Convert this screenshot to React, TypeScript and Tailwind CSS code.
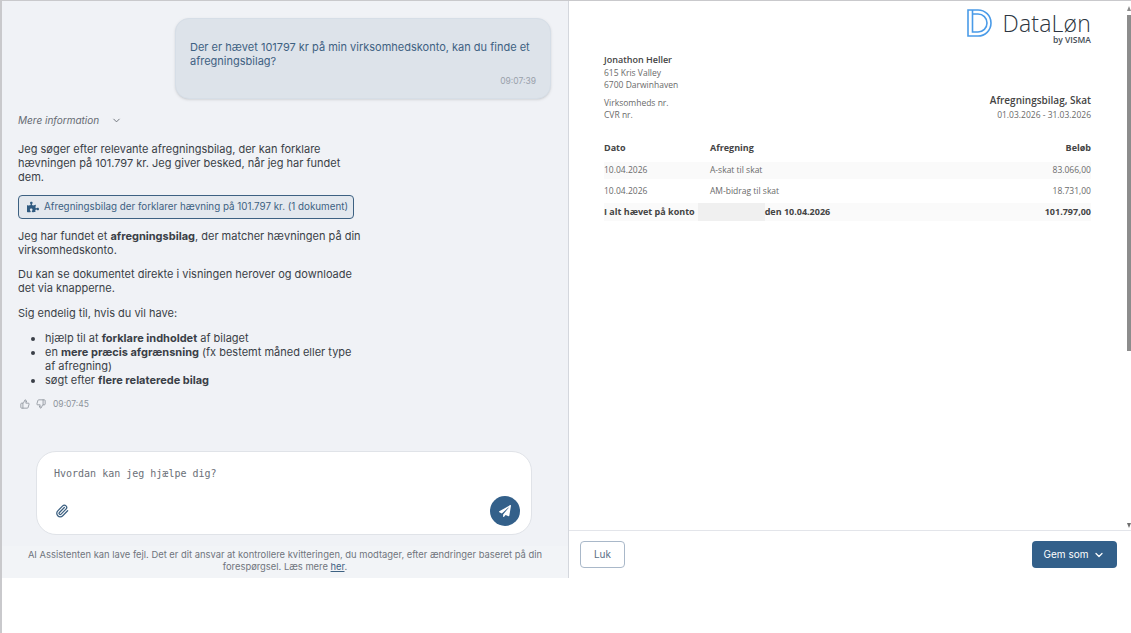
import { ChevronDown, Paperclip, ThumbsDown, ThumbsUp } from 'lucide-react';
import { FaPaperPlane, FaPuzzlePiece } from 'react-icons/fa';

const Logo = () => (
  <div className="flex flex-col items-end">
    <div className="flex items-center gap-[10px]">
      <svg width="25" height="28" viewBox="0 0 25 28" fill="none" stroke="#4a9be8" strokeWidth="1.6">
        <path d="M1 1h10c7 0 13 5.500 13 13s-6 13-13 13H1z" />
        <path d="M5.500 1v22h5.500c5 0 9-4 9-9s-4-9-9-9H5.500" />
      </svg>
      <span className="font-['Open_Sans',sans-serif] text-[23px] leading-[28px] font-light tracking-[0.2px] text-[#2c3540]">DataLøn</span>
    </div>
    <span className="mt-[-2px] font-['Open_Sans',sans-serif] text-[8.500px] leading-[10px] font-semibold text-[#444c55]">by VISMA</span>
  </div>
);

const rows = [
  { date: '10.04.2026', label: 'A-skat til skat', amount: '83.066,00', shaded: true },
  { date: '10.04.2026', label: 'AM-bidrag til skat', amount: '18.731,00', shaded: false },
];

const Document = () => (
  <div className="flex-1 overflow-hidden pt-2 pr-[40px] pl-[35px] font-['Open_Sans',sans-serif] text-[8.500px] text-[#6a6a6a]">
    <div className="flex justify-end">
      <Logo />
    </div>
    <div className="mt-[9px] flex items-end justify-between">
      <div className="leading-[12.500px]">
        <p className="text-[9px] font-semibold text-[#444]">Jonathon Heller</p>
        <p>615 Kris Valley</p>
        <p>6700 Darwinhaven</p>
        <p className="mt-[5px]">Virksomheds nr.</p>
        <p>CVR nr.</p>
      </div>
      <div className="text-right">
        <p className="text-[10px] leading-[15px] font-semibold text-[#444]">Afregningsbilag, Skat</p>
        <p className="leading-[14px]">01.03.2026 - 31.03.2026</p>
      </div>
    </div>
    <div className="mt-[13px] flex h-[27px] items-center text-[9px] font-bold text-[#444]">
      <span className="w-[106px]">Dato</span>
      <span className="flex-1">Afregning</span>
      <span>Beløb</span>
    </div>
    {rows.map((row) => (
      <div key={row.label} className={`flex h-[17px] items-center ${row.shaded ? 'mb-[4px] bg-[#fafafa]' : 'mb-[3px]'}`}>
        <span className="w-[106px]">{row.date}</span>
        <span className="flex-1">{row.label}</span>
        <span>{row.amount}</span>
      </div>
    ))}
    <div className="flex h-[18px] items-center bg-[#fafafa] text-[9px] font-bold text-[#444]">
      <span>I alt hævet på konto</span>
      <span className="ml-[3px] h-full w-[67px] bg-[#f0f0f0]" />
      <span className="flex-1">den 10.04.2026</span>
      <span>101.797,00</span>
    </div>
  </div>
);

export default function App() {
  return (
    <div className="h-[633px] w-[1131px] overflow-hidden border-t-[1.500px] border-l-2 border-[#c9c9cc] bg-white font-['Inter',sans-serif]">
      <div className="flex h-[577px]">
        <div className="flex w-[567px] shrink-0 flex-col border-r border-[#d4d7dd] bg-[#f0f2f6]">
          <div className="flex-1 overflow-hidden pt-[17px] pr-[16px] pl-[16px] text-[11px] leading-[14px] text-[#3a3f47]">
            <div className="ml-[157px] h-[81px] w-[376px] rounded-[14px] border border-[#d6dee7] bg-[#dde3ea] px-[14px] pt-[21px] shadow-sm">
              <p className="leading-[14px] text-[#3d6182]">
                Der er hævet 101797 kr på min virksomhedskonto, kan du finde et afregningsbilag?
              </p>
              <p className="mt-[7px] text-right text-[8.500px] leading-[12px] text-[#9aa1aa]">09:07:39</p>
            </div>

            <div className="mt-[15px] flex items-center gap-[12px] text-[10px] leading-[12px] text-[#666b73] italic">
              <span>Mere information</span>
              <ChevronDown size={11} />
            </div>

            <p className="mt-[16px] w-[345px]">
              Jeg søger efter relevante afregningsbilag, der kan forklare hævningen på 101.797 kr. Jeg giver besked, når jeg har fundet dem.
            </p>

            <div className="mt-[11px] flex h-[24px] w-[336px] items-center gap-[5px] rounded-[4px] border border-[#3d6182] bg-[#e3e8ee] pl-[8px] text-[9.800px] text-[#3d6182]">
              <FaPuzzlePiece size={12} className="shrink-0 text-[#2f5a80]" />
              <span className="whitespace-nowrap">Afregningsbilag der forklarer hævning på 101.797 kr. (1 dokument)</span>
            </div>

            <p className="mt-[10px] w-[345px]">
              Jeg har fundet et <b>afregningsbilag</b>, der matcher hævningen på din virksomhedskonto.
            </p>
            <p className="mt-[10px] w-[345px]">
              Du kan se dokumentet direkte i visningen herover og downloade det via knapperne.
            </p>
            <p className="mt-[11px]">Sig endelig til, hvis du vil have:</p>
            <ul className="mt-[11px] w-[345px] list-disc pl-[27px]">
              <li>hjælp til at <b>forklare indholdet</b> af bilaget</li>
              <li>en <b>mere præcis afgrænsning</b> (fx bestemt måned eller type af afregning)</li>
              <li>søgt efter <b>flere relaterede bilag</b></li>
            </ul>

            <div className="mt-[11px] flex items-center gap-[6px] text-[#8d939b]">
              <ThumbsUp size={10} className="ml-[2px]" />
              <ThumbsDown size={10} />
              <span className="ml-[1px] text-[8.500px] leading-[12px]">09:07:45</span>
            </div>
          </div>

          <div className="mr-[36px] ml-[34px] flex h-[84px] flex-col justify-between rounded-[20px] border border-[#e0e3e8] bg-white pt-[15px] pr-[11px] pb-[8px] pl-[17px]">
            <span className="font-['DejaVu_Sans_Mono',monospace] text-[10px] leading-[14px] text-[#6b7078]">Hvordan kan jeg hjælpe dig?</span>
            <div className="flex items-center justify-between">
              <Paperclip size={14} strokeWidth={2.200} className="ml-[1px] text-[#3d6182]" />
              <span className="flex h-[30px] w-[30px] items-center justify-center rounded-full bg-[#33608a]">
                <FaPaperPlane size={12} className="text-white" />
              </span>
            </div>
          </div>

          <div className="mt-[11px] h-[32px] bg-[#f2f4f7] px-[20px] pt-[3px] text-center text-[9.400px] leading-[12px] text-[#70757d]">
            AI Assistenten kan lave fejl. Det er dit ansvar at kontrollere kvitteringen, du modtager, efter ændringer baseret på din forespørgsel. Læs mere <span className="text-[#3d6182] underline">her</span>.
          </div>
        </div>

        <div className="relative flex min-w-0 flex-1 flex-col">
          <Document />
          <span className="absolute top-[5px] right-0 h-0 w-0 border-x-[2.500px] border-b-[5px] border-x-transparent border-b-[#8c8c8c]" />
          <div className="absolute top-[14px] right-0 h-[336px] w-[4px] bg-[#8c8c8c]" />
          <span className="absolute top-[522px] right-0 h-0 w-0 border-x-[2.500px] border-t-[5px] border-x-transparent border-t-[#6f6f6f]" />
          <div className="flex h-[48px] items-center justify-between border-t border-[#e3e5ea] pr-[14px] pl-[11px]">
            <button className="h-[27px] w-[45px] rounded-[4px] border border-[#a9b8c9] text-[10px] text-[#5b6f86]">Luk</button>
            <button className="flex h-[27px] w-[85px] items-center justify-center gap-[5px] rounded-[4px] bg-[#33608a] text-[10px] text-white">
              Gem som <ChevronDown size={12} strokeWidth={2.500} />
            </button>
          </div>
        </div>
      </div>
    </div>
  );
}
